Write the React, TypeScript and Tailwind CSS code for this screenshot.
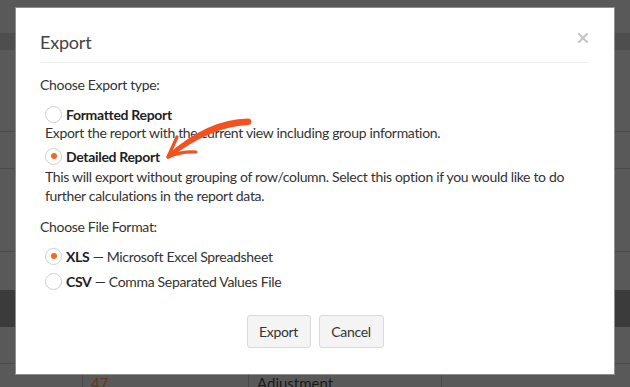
import React from "react";

const font = { fontFamily: "Lato, 'Liberation Sans', sans-serif" };

function Radio({ checked }: { checked?: boolean }) {
  return (
    <span className="flex h-[17px] w-[17px] shrink-0 items-center justify-center rounded-full border border-[#cfcfcf] bg-white">
      {checked ? <span className="h-[6px] w-[6px] rounded-full bg-[#f26a1f]" /> : null}
    </span>
  );
}

export default function App() {
  return (
    <div className="relative h-[387px] w-[630px] overflow-hidden bg-[#595959]" style={font}>
      {/* background page under the overlay */}
      <div className="flex flex-col">
        <div className="h-[33px]" />
        <div className="h-[17px] bg-[#4e4e4e]" />
        <div className="h-[82px] border-b border-[#4a4a4a]" />
        <div className="h-[37px] border-b border-[#4a4a4a]" />
        <div className="h-[83px] border-b border-[#4a4a4a]" />
        <div className="h-[38px]" />
        <div className="h-[37px] bg-[#3b3b3b]" />
        <div className="h-[37px] border-b border-[#4a4a4a]" />
        <div className="flex h-[40px] text-[15px]">
          <div className="w-[83px] border-r border-[#4a4a4a]" />
          <div className="w-[166px] border-r border-[#4a4a4a] pl-[8px] pt-[8px] text-[#6e3318]">47</div>
          <div className="w-[193px] border-r border-[#4a4a4a] pl-[8px] pt-[8px] text-[#1a1a1a]">Adjustment</div>
          <div className="flex-1" />
        </div>
      </div>

      {/* modal */}
      <div className="absolute left-[15px] top-[7px] flex h-[368px] w-[600px] flex-col border border-[#8f8f8f] bg-white">
        <div className="relative mx-[24px] border-b border-[#eeeeee] pb-[8px] pt-[22px]">
          <div className="text-[18px] leading-[24px] tracking-[-0.2px] text-[#444444]">Export</div>
          <svg className="absolute right-[2px] top-[25px]" width="10" height="10" viewBox="0 0 10 10">
            <path d="M1 1 L9 9 M9 1 L1 9" stroke="#c6c6c6" strokeWidth="2.2" strokeLinecap="square" />
          </svg>
        </div>

        <div className="flex flex-col px-[24px] text-[14px] tracking-[-0.32px] text-[#333333]">
          <div className="mt-[12px] leading-[20px]">Choose Export type:</div>

          <div className="pl-[5px]">
            <div className="mt-[10px] flex h-[18px] items-center gap-[4px]">
              <Radio />
              <span className="font-bold text-[#1e1e1e]">Formatted Report</span>
            </div>
            <div className="whitespace-nowrap leading-[19px]">Export the report with the current view including group information.</div>

            <div className="mt-[5px] flex h-[18px] items-center gap-[4px]">
              <Radio checked />
              <span className="font-bold text-[#1e1e1e]">Detailed Report</span>
            </div>
            <div className="mt-[2px] whitespace-nowrap leading-[19px]">
              This will export without grouping of row/column. Select this option if you would like to do
              <br />
              further calculations in the report data.
            </div>
          </div>

          <div className="mt-[12px] leading-[20px]">Choose File Format:</div>

          <div className="pl-[5px]">
            <div className="mt-[10px] flex h-[18px] items-center gap-[4px]">
              <Radio checked />
              <span>
                <span className="font-bold text-[#1e1e1e]">XLS</span> — Microsoft Excel Spreadsheet
              </span>
            </div>
            <div className="mt-[7px] flex h-[18px] items-center gap-[4px]">
              <Radio />
              <span>
                <span className="font-bold text-[#1e1e1e]">CSV</span> — Comma Separated Values File
              </span>
            </div>
          </div>

          <div className="mt-[25px] flex justify-center gap-[8px]">
            <button className="h-[33px] w-[64px] rounded-[3px] border border-[#dadada] bg-[#f4f4f4] text-[14px] text-[#333333]">
              Export
            </button>
            <button className="h-[33px] w-[65px] rounded-[3px] border border-[#dadada] bg-[#f4f4f4] text-[14px] text-[#333333]">
              Cancel
            </button>
          </div>
        </div>
      </div>

      {/* annotation arrow */}
      <svg className="pointer-events-none absolute left-0 top-0" width="630" height="387" viewBox="0 0 630 387">
        <path
          d="M248 118.5 Q208 119 167 155 L170 158 Q210 127 248 125 A3.2 3.2 0 0 0 248 118.5 Z"
          fill="#f4511e"
        />
        <path d="M168 157 L177 137" stroke="#f4511e" strokeWidth="3.2" strokeLinecap="round" fill="none" />
        <path d="M168 157 Q182 151 196 152" stroke="#f4511e" strokeWidth="3.2" strokeLinecap="round" fill="none" />
      </svg>
    </div>
  );
}
